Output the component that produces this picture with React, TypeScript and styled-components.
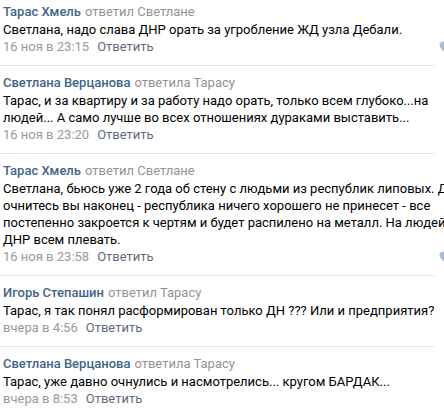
import React from 'react';
import styled, { createGlobalStyle } from 'styled-components';

const GlobalStyle = createGlobalStyle`
  html, body {
    margin: 0;
    padding: 0;
    background: #ffffff;
    overflow: hidden;
  }
  body {
    font-family: Roboto, 'Liberation Sans', Arial, sans-serif;
    font-size: 13px;
    color: #000;
  }
`;

const List = styled.div`
  margin-top: -5px;
  display: flex;
  flex-direction: column;
`;

const Item = styled.div`
  width: 432px;
  padding: 8px 0 9px 3px;
  border-bottom: 1px solid #e7e8ec;
`;

const Header = styled.div`
  line-height: 18px;
  white-space: nowrap;
`;

const Author = styled.a`
  color: #42648b;
  font-weight: 500;
  text-decoration: none;
`;

const Action = styled.span`
  color: #939393;
  margin-left: 4px;
`;

const Body = styled.div`
  line-height: 17px;
`;

const Line = styled.div`
  white-space: nowrap;
`;

const Footer = styled.div`
  display: flex;
  align-items: center;
  line-height: 18px;
  margin-right: -19px;
`;

const Date = styled.span`
  color: #999999;
`;

const Reply = styled.a`
  color: #5e6d7e;
  margin-left: 8px;
  text-decoration: none;
`;

const Like = styled.svg`
  margin-left: auto;
  width: 15px;
  height: 13px;
`;

type Comment = {
  author: string;
  action: string;
  lines: string[];
  date: string;
  liked?: boolean;
};

const comments: Comment[] = [
  {
    author: 'Тарас Хмель',
    action: 'ответил Светлане',
    lines: ['Светлана, надо слава ДНР орать за угробление ЖД узла Дебали.'],
    date: '16 ноя в 23:15',
    liked: true,
  },
  {
    author: 'Светлана Верцанова',
    action: 'ответила Тарасу',
    lines: [
      'Тарас, и за квартиру и за работу надо орать, только всем глубоко...на',
      'людей... А само лучше во всех отношениях дураками выставить...',
    ],
    date: '16 ноя в 23:20',
  },
  {
    author: 'Тарас Хмель',
    action: 'ответил Светлане',
    lines: [
      'Светлана, бьюсь уже 2 года об стену с людьми из республик липовых. Д',
      'очнитесь вы наконец - республика ничего хорошего не принесет - все',
      'постепенно закроется к чертям и будет распилено на металл. На людей',
      'ДНР всем плевать.',
    ],
    date: '16 ноя в 23:58',
    liked: true,
  },
  {
    author: 'Игорь Степашин',
    action: 'ответил Тарасу',
    lines: ['Тарас, я так понял расформирован только ДН ??? Или и предприятия?'],
    date: 'вчера в 4:56',
  },
  {
    author: 'Светлана Верцанова',
    action: 'ответила Тарасу',
    lines: ['Тарас, уже давно очнулись и насмотрелись... кругом БАРДАК...'],
    date: 'вчера в 8:53',
  },
];

const App: React.FC = () => {
  return (
    <>
      <GlobalStyle />
      <List>
        {comments.map((c, i) => (
          <Item key={i}>
            <Header>
              <Author href="#">{c.author}</Author>
              <Action>{c.action}</Action>
            </Header>
            <Body>
              {c.lines.map((l, j) => (
                <Line key={j}>{l}</Line>
              ))}
            </Body>
            <Footer>
              <Date>{c.date}</Date>
              <Reply href="#">Ответить</Reply>
              {c.liked && (
                <Like viewBox="0 0 15 13">
                  <path
                    d="M7.5 12.5 C7.5 12.5 0.5 8 0.5 4 C0.5 1.8 2.2 0.5 4 0.5 C5.6 0.5 6.8 1.4 7.5 2.6 C8.2 1.4 9.4 0.5 11 0.5 C12.8 0.5 14.5 1.8 14.5 4 C14.5 8 7.5 12.5 7.5 12.5 Z"
                    fill="#aebdcf"
                  />
                </Like>
              )}
            </Footer>
          </Item>
        ))}
      </List>
    </>
  );
};

export default App;
